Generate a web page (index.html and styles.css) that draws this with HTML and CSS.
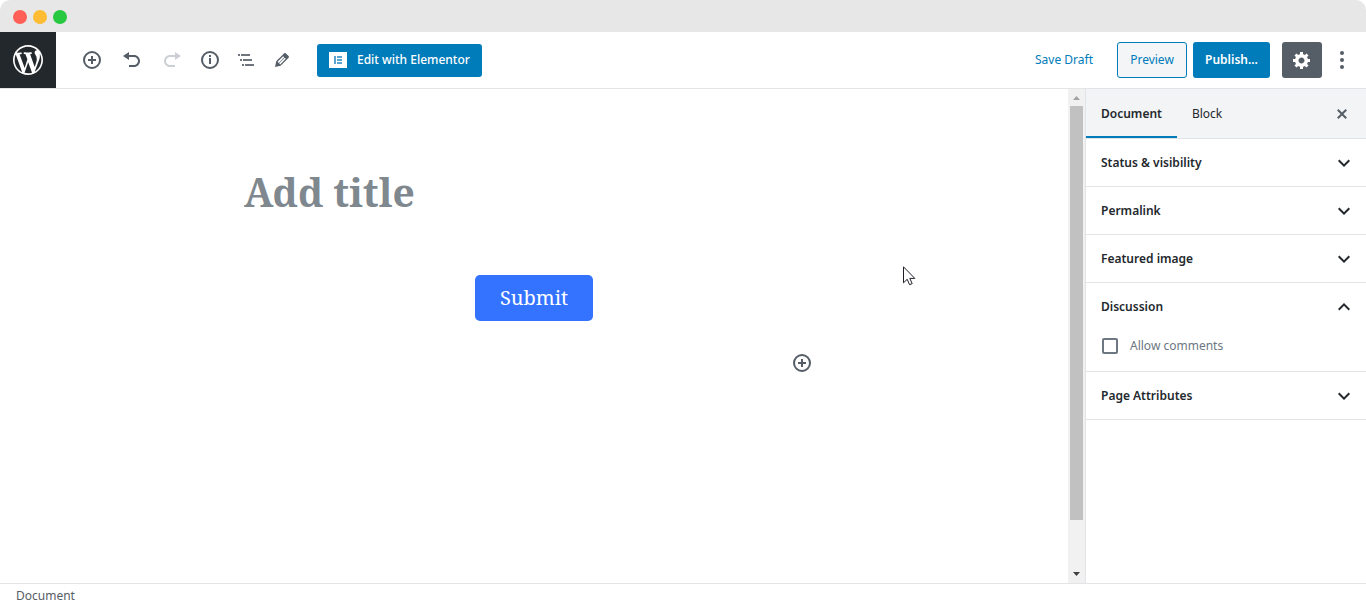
FILE: index.html
```html
<!DOCTYPE html>
<html lang="en">
<head>
<meta charset="utf-8">
<meta name="viewport" content="width=device-width, initial-scale=1">
<title>Add New Page</title>
<link rel="stylesheet" href="styles.css">
</head>
<body>
<div class="window">
  <div class="titlebar">
    <span class="light light-red"></span>
    <span class="light light-yellow"></span>
    <span class="light light-green"></span>
  </div>

  <header class="header">
    <a class="logo" href="#" aria-label="View pages">
      <svg width="36" height="36" viewBox="-2 -2 24 24"><path d="M20 10c0-5.51-4.49-10-10-10C4.48 0 0 4.49 0 10c0 5.52 4.48 10 10 10 5.51 0 10-4.48 10-10zM7.78 15.37L4.37 6.22c.55-.02 1.17-.08 1.17-.08.5-.06.44-1.13-.06-1.11 0 0-1.45.11-2.37.11-.18 0-.37 0-.58-.01C4.12 2.69 6.87 1.11 10 1.11c2.33 0 4.45.87 6.05 2.34-.68-.11-1.65.39-1.65 1.58 0 .74.45 1.36.9 2.1.35.61.55 1.36.55 2.46 0 1.49-1.4 5-1.4 5l-3.03-8.37c.54-.02.82-.17.82-.17.5-.05.44-1.25-.06-1.22 0 0-1.44.12-2.38.12-.87 0-2.33-.12-2.33-.12-.5-.03-.56 1.2-.06 1.22l.92.08 1.26 3.41zM17.41 10c.24-.64.74-1.87.43-4.25.7 1.29 1.05 2.71 1.05 4.25 0 3.29-1.73 6.24-4.4 7.78.97-2.59 1.94-5.2 2.92-7.78zM6.1 18.09C3.12 16.65 1.11 13.53 1.11 10c0-1.3.23-2.48.72-3.59C3.25 10.3 4.67 14.2 6.1 18.09zm4.03-6.63l2.58 6.98c-.86.29-1.76.45-2.71.45-.79 0-1.57-.11-2.29-.33.81-2.38 1.62-4.74 2.42-7.1z"/></svg>
    </a>
    <div class="toolbar">
      <div class="tools tools-spaced">
        <button class="icon-button" type="button" aria-label="Add block">
          <svg width="20" height="20" viewBox="0 0 20 20"><circle class="line" cx="10" cy="10" r="8"/><path d="M9 6h2v3h3v2h-3v3H9v-3H6V9h3z"/></svg>
        </button>
        <button class="icon-button" type="button" aria-label="Undo">
          <svg width="20" height="20" viewBox="0 0 20 20"><path d="M12 5H7V2L1 6l6 4V7h5c2.2 0 4 1.8 4 4s-1.800 4-4 4H7v2h5c3.300 0 6-2.700 6-6s-2.700-6-6-6z"/></svg>
        </button>
        <button class="icon-button" type="button" aria-label="Redo" disabled>
          <svg width="20" height="20" viewBox="0 0 20 20"><path d="M8 5h5V2l6 4-6 4V7H8c-2.200 0-4 1.800-4 4s1.800 4 4 4h5v2H8c-3.300 0-6-2.700-6-6s2.700-6 6-6z"/></svg>
        </button>
      </div>
      <div class="tools">
        <button class="icon-button" type="button" aria-label="Content structure">
          <svg width="20" height="20" viewBox="0 0 20 20"><circle class="line" cx="10" cy="10" r="8"/><path d="M9 5h2v2H9zM9 8h2v6H9z"/></svg>
        </button>
        <button class="icon-button" type="button" aria-label="Block navigation">
          <svg width="20" height="20" viewBox="0 0 20 20"><path class="soft" d="M2 4h2v2H2zM5 4h9v2H5zM4 9h2v2H4zM7 9h9v2H7zM6 14h2v2H6zM9 14h9v2H9z"/></svg>
        </button>
        <button class="icon-button" type="button" aria-label="Edit">
          <svg width="20" height="20" viewBox="0 0 20 20"><path d="M13.890 3.390l2.710 2.720c.46.46.42 1.240.03 1.640l-8.010 8.020-5.560 1.160 1.160-5.580s7.600-7.630 7.990-8.030c.39-.39 1.220-.39 1.680.07zm-2.730 2.790l-5.590 5.610 1.110 1.110 5.540-5.650zm-2.970 8.230l5.580-5.600-1.070-1.080-5.590 5.600z"/></svg>
        </button>
      </div>
      <button class="button primary elementor" type="button">
        <svg width="18" height="16" viewBox="0 0 18 16"><path d="M0 0h18v16H0z"/><path class="mark" d="M5 4h2v8H5zM8 4h5v2H8zM8 7h5v2H8zM8 10h5v2H8z"/></svg>
        Edit with Elementor
      </button>
    </div>
    <div class="actions">
      <button class="save" type="button">Save Draft</button>
      <button class="button preview" type="button">Preview</button>
      <button class="button primary publish" type="button">Publish...</button>
      <button class="settings" type="button" aria-label="Settings">
        <svg width="20" height="20" viewBox="0 0 20 20"><path d="M18 12h-2.180c-.17.7-.44 1.350-.81 1.930l1.540 1.540-2.100 2.100-1.540-1.540c-.58.36-1.230.63-1.910.79V19H8v-2.180c-.68-.16-1.330-.43-1.910-.79l-1.540 1.540-2.120-2.120 1.540-1.540c-.36-.58-.63-1.230-.79-1.910H1V9.030h2.170c.16-.7.44-1.350.8-1.940L2.430 5.550l2.100-2.100 1.540 1.540c.58-.37 1.240-.64 1.930-.81V2h3v2.180c.68.16 1.330.43 1.910.79l1.540-1.540 2.120 2.120-1.540 1.540c.36.59.64 1.240.8 1.940H18V12zm-8.500 1.500c1.660 0 3-1.340 3-3s-1.340-3-3-3-3 1.340-3 3 1.340 3 3 3z"/></svg>
      </button>
      <button class="more" type="button" aria-label="More tools">
        <svg width="20" height="20" viewBox="0 0 20 20"><circle cx="10" cy="3" r="2"/><circle cx="10" cy="10" r="2"/><circle cx="10" cy="17" r="2"/></svg>
      </button>
    </div>
  </header>

  <div class="workspace">
    <main class="editor">
      <div class="content">
        <input class="title" type="text" placeholder="Add title" aria-label="Add title">
        <button class="submit" type="button">Submit</button>
        <button class="icon-button appender" type="button" aria-label="Add block">
          <svg width="20" height="20" viewBox="0 0 20 20"><circle class="line" cx="10" cy="10" r="8"/><path d="M9 6h2v3h3v2h-3v3H9v-3H6V9h3z"/></svg>
        </button>
      </div>
      <svg class="cursor" width="13" height="20" viewBox="0 0 13 20"><path d="M.5.8v16l3.700-3.500 2.400 5.400 2.600-1.100-2.400-5.200h5z"/></svg>
    </main>

    <div class="scrollbar" aria-hidden="true">
      <svg width="7" height="4" viewBox="0 0 7 4"><path class="up" d="M0 4l3.500-4L7 4z"/></svg>
      <div class="track"><div class="thumb"></div></div>
      <svg width="7" height="4" viewBox="0 0 7 4"><path class="down" d="M0 0h7L3.500 4z"/></svg>
    </div>

    <aside class="sidebar">
      <div class="tabs">
        <button class="tab active" type="button">Document</button>
        <button class="tab" type="button">Block</button>
        <button class="close" type="button" aria-label="Close settings">
          <svg width="20" height="20" viewBox="0 0 20 20"><path d="M14.950 6.460L11.410 10l3.540 3.540-1.410 1.410L10 11.420l-3.530 3.530-1.420-1.420L8.580 10 5.050 6.470l1.420-1.420L10 8.580l3.540-3.530z"/></svg>
        </button>
      </div>
      <section class="panel">
        <button class="panel-toggle" type="button">Status &amp; visibility
          <svg width="24" height="24" viewBox="0 0 24 24"><path d="M7.410 8.590L12 13.170l4.590-4.580L18 10l-6 6-6-6z"/></svg></button>
      </section>
      <section class="panel">
        <button class="panel-toggle" type="button">Permalink
          <svg width="24" height="24" viewBox="0 0 24 24"><path d="M7.410 8.590L12 13.170l4.590-4.580L18 10l-6 6-6-6z"/></svg></button>
      </section>
      <section class="panel">
        <button class="panel-toggle" type="button">Featured image
          <svg width="24" height="24" viewBox="0 0 24 24"><path d="M7.410 8.590L12 13.170l4.590-4.580L18 10l-6 6-6-6z"/></svg></button>
      </section>
      <section class="panel">
        <button class="panel-toggle" type="button" aria-expanded="true">Discussion
          <svg width="24" height="24" viewBox="0 0 24 24"><path d="M12 8l-6 6 1.410 1.410L12 10.830l4.590 4.580L18 14z"/></svg></button>
        <div class="option">
          <input class="checkbox" type="checkbox" id="allow-comments">
          <label for="allow-comments">Allow comments</label>
        </div>
      </section>
      <section class="panel">
        <button class="panel-toggle" type="button">Page Attributes
          <svg width="24" height="24" viewBox="0 0 24 24"><path d="M7.410 8.590L12 13.170l4.590-4.580L18 10l-6 6-6-6z"/></svg></button>
      </section>
    </aside>
  </div>

  <footer class="footer">Document</footer>
</div>
</body>
</html>
```
FILE: styles.css
```css
* {
  box-sizing: border-box;
}

body {
  margin: 0;
  background: #fff;
  color: #23282d;
  font: 12px/20px "Segoe UI", "Noto Sans", "Open Sans", sans-serif;
}

button {
  margin: 0;
  padding: 0;
  border: 0;
  background: none;
  color: inherit;
  font: inherit;
  cursor: pointer;
}

svg {
  display: block;
  flex: none;
  fill: currentColor;
}

.line {
  fill: none;
  stroke: currentColor;
  stroke-width: 2;
}

.window {
  display: flex;
  flex-direction: column;
  min-height: 100vh;
  overflow: hidden;
  border-radius: 10px;
}

.titlebar {
  display: flex;
  align-items: center;
  gap: 6px;
  height: 32px;
  padding: 2px 13px 0;
  background: #e7e7e7;
}

.light {
  width: 14px;
  height: 14px;
  border-radius: 50%;
}

.light-red { background: #ff5f57; }
.light-yellow { background: #fdbc34; }
.light-green { background: #28c840; }

.header {
  display: flex;
  align-items: center;
  height: 57px;
  border-bottom: 1px solid #e2e4e7;
}

.logo {
  display: flex;
  align-items: center;
  justify-content: center;
  align-self: stretch;
  width: 56px;
  background: #23282d;
  color: #fff;
}

.toolbar,
.tools,
.actions {
  display: flex;
  align-items: center;
}

.toolbar {
  gap: 2px;
  padding-left: 18px;
}

.tools-spaced {
  gap: 4px;
}

.icon-button {
  display: flex;
  align-items: center;
  justify-content: center;
  width: 36px;
  height: 36px;
  color: #555d66;
}

.icon-button:disabled {
  color: #ccd0d4;
}

.soft {
  opacity: .85;
}

.button {
  height: 36px;
  border-radius: 3px;
  font-weight: 500;
  white-space: nowrap;
}

.primary {
  background: #007cba;
  color: #fff;
}

.elementor {
  display: flex;
  align-items: center;
  gap: 10px;
  height: 33px;
  margin-left: 15px;
  padding: 0 12px;
}

.mark {
  fill: #5aa5cf;
}

.actions {
  margin-left: auto;
  padding-right: 4px;
}

.save {
  margin-right: 24px;
  color: #007cba;
  white-space: nowrap;
}

.preview {
  width: 70px;
  margin-right: 6px;
  border: 1px solid #007cba;
  background: #f3f5f6;
  color: #007cba;
  font-weight: 400;
}

.publish {
  width: 77px;
  margin-right: 12px;
  font-weight: 600;
}

.settings,
.more {
  display: flex;
  align-items: center;
  justify-content: center;
  height: 36px;
}

.settings {
  width: 40px;
  border-radius: 3px;
  background: #555d66;
  color: #fff;
}

.more {
  width: 40px;
  color: #555d66;
}

.workspace {
  display: flex;
  flex: 1;
}

.editor {
  position: relative;
  flex: 1;
  min-width: 0;
}

.content {
  display: flex;
  flex-direction: column;
  align-items: center;
  max-width: 580px;
  margin: 0 auto;
  padding-top: 70px;
}

.title {
  width: 100%;
  height: 64px;
  padding: 0;
  border: 0;
  outline: 0;
  background: none;
  font: bold 39px/60px "Noto Serif", "DejaVu Serif", serif;
}

.title::placeholder {
  color: #80888f;
  opacity: 1;
}

.submit {
  width: 118px;
  height: 46px;
  margin-top: 52px;
  border-radius: 5px;
  background: #3373ff;
  color: #fff;
  font: 20px/24px "Noto Serif", "DejaVu Serif", serif;
}

.appender {
  align-self: flex-end;
  margin: 24px 4px 0 0;
}

.cursor {
  position: absolute;
  top: 177px;
  left: 903px;
  fill: #fff;
  stroke: #1e1e28;
}

.scrollbar {
  display: flex;
  flex-direction: column;
  align-items: center;
  gap: 6px;
  width: 17px;
  padding: 7px 0;
  background: #f1f1f1;
}

.track {
  flex: 1;
}

.thumb {
  width: 13px;
  height: 90%;
  background: #c1c1c1;
}

.up { fill: #a3a3a3; }
.down { fill: #404040; }

.sidebar {
  width: 281px;
  border-left: 1px solid #e2e4e7;
}

.tabs {
  display: flex;
  height: 50px;
  border-bottom: 1px solid #e2e4e7;
  background: #f3f4f5;
}

.tab {
  padding: 2px 15px 0;
  border-bottom: 2px solid transparent;
}

.active {
  border-color: #007cba;
  font-weight: 600;
}

.close {
  margin-left: auto;
  padding: 0 14px;
  color: #555d66;
}

.panel {
  border-bottom: 1px solid #e2e4e7;
}

.panel-toggle {
  display: flex;
  align-items: center;
  justify-content: space-between;
  width: 100%;
  height: 47px;
  padding: 0 10px 0 15px;
  font-weight: 600;
}

.option {
  display: flex;
  align-items: center;
  gap: 12px;
  padding: 6px 16px 15px;
  color: #6c7781;
}

.checkbox {
  appearance: none;
  width: 16px;
  height: 16px;
  margin: 0;
  border: 2px solid #6c7781;
  border-radius: 2px;
}

.checkbox:checked {
  background: #007cba;
}

.footer {
  height: 25px;
  padding: 2px 16px;
  border-top: 1px solid #e2e4e7;
  color: #555d66;
}
```
